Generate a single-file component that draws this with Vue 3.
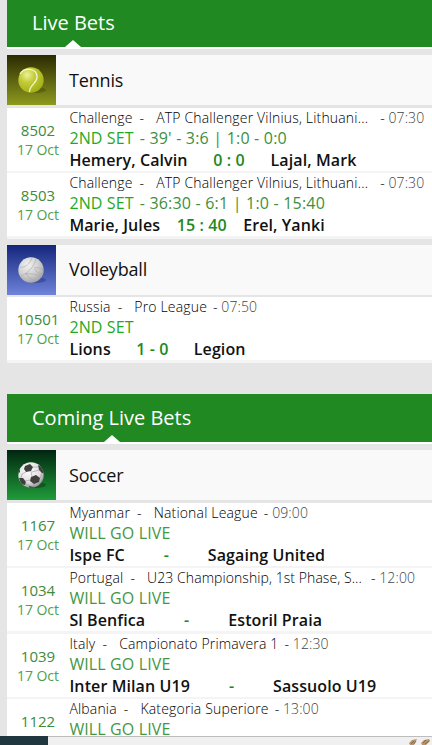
<template>
<div class="page">
    <div class="block" v-for="block in blocks" :key="block.title">
        <div class="block-title" :class="block.size">
            <span>{{ block.title }}</span>
        </div>
        <div class="sport" v-for="sport in block.sports" :key="sport.name">
            <div class="sport-head" :class="sport.icon">
                <div class="sport-icon">
                    <svg v-if="sport.icon === 'tennis'" width="32" height="30" viewBox="0 0 32 30">
                        <defs>
                            <radialGradient id="tg" cx="35%" cy="30%" r="75%">
                                <stop offset="0" stop-color="#eef29a" />
                                <stop offset=".4" stop-color="#c3cb38" />
                                <stop offset="1" stop-color="#a3ae14" />
                            </radialGradient>
                        </defs>
                        <ellipse cx="20" cy="25" rx="10" ry="3" fill="#3c4208" opacity=".4" />
                        <circle cx="15" cy="15" r="12.7" fill="url(#tg)" />
                        <path d="M4 9C8 2 20 3 21 11C22 18 13 20 13.5 27" fill="none" stroke="#f3f5d4" stroke-width="1.3" />
                    </svg>
                    <svg v-else-if="sport.icon === 'volley'" width="32" height="30" viewBox="0 0 32 30">
                        <defs>
                            <radialGradient id="vg" cx="38%" cy="30%" r="75%">
                                <stop offset="0" stop-color="#f2f2f2" />
                                <stop offset=".55" stop-color="#d0d0d0" />
                                <stop offset="1" stop-color="#a2a2a6" />
                            </radialGradient>
                        </defs>
                        <ellipse cx="20" cy="25" rx="10" ry="3" fill="#26347c" opacity=".45" />
                        <circle cx="15" cy="15" r="12.7" fill="url(#vg)" />
                        <g fill="none" stroke="#a8a8a8" stroke-width=".6">
                            <path d="M4 12C9 13 14 9 16 3M5 21C12 18 18 12 20 4M9 19C16 18 23 20 26 22M10 18C12 22 16 25 20 26M18 13C22 12 25 13 27 15M19 14C20 17 23 19 27 19" />
                        </g>
                    </svg>
                    <svg v-else width="32" height="30" viewBox="0 0 32 30">
                        <defs>
                            <radialGradient id="sg" cx="40%" cy="32%" r="72%">
                                <stop offset="0" stop-color="#ffffff" />
                                <stop offset=".65" stop-color="#dedede" />
                                <stop offset="1" stop-color="#909090" />
                            </radialGradient>
                            <clipPath id="sc"><circle cx="15" cy="15" r="12.7" /></clipPath>
                        </defs>
                        <ellipse cx="20" cy="25" rx="10" ry="3" fill="#082e12" opacity=".45" />
                        <circle cx="15" cy="15" r="12.7" fill="url(#sg)" />
                        <g clip-path="url(#sc)">
                            <path d="M9 6L14 4L17 7L15 11L10 12L8 9ZM22 5L26 7L29 13L26 13L23 10ZM15 17L20 15L24 18L23 22L18 24L14 21ZM3 18L7 18L10 22L9 25L5 24ZM2 10L4 9L4 12L2 14ZM13 26L18 27L18 29L13 29Z" fill="#404040" />
                            <path d="M17 7L22 7M15 11L16 17M10 12L6 14L5 18M9 21L14 20M24 18L26 13M23 22L26 24M10 24L14 26M18 24L18 27M16 12L23 10" fill="none" stroke="#999" stroke-width=".6" />
                        </g>
                    </svg>
                </div>
                <p>{{ sport.name }}</p>
            </div>
            <div class="match" v-for="m in sport.matches" :key="m.id">
                <div class="match-id">
                    <p class="num">{{ m.id }}</p>
                    <p v-if="m.date" class="date">{{ m.date }}</p>
                </div>
                <div class="match-info">
                    <div class="league">
                        <span>{{ m.country }}</span>
                        <span class="dash">-</span>
                        <span class="league-name" :class="m.fit">{{ m.league }}</span>
                        <span class="time"><i>-</i> {{ m.time }}</span>
                    </div>
                    <div class="status">
                        <span :class="{ bright: sport.live }">{{ m.status }}</span>
                        <span v-if="m.detail" class="detail">{{ m.detail }}</span>
                    </div>
                    <div v-if="m.home" class="teams">
                        <span>{{ m.home }}</span>
                        <span class="score">{{ m.score }}</span>
                        <span>{{ m.away }}</span>
                    </div>
                </div>
            </div>
        </div>
    </div>
    <div class="bottom-bar">
        <div class="bottom-tab"></div>
        <svg class="wings" width="24" height="6" viewBox="0 0 24 6">
            <path d="M1 4L4 1L9 0L6 6L2 6ZM13 4L16 1L21 0L22 2L18 6L14 6Z" fill="#b8956c" />
            <path d="M3 5L6 2M6 5L8 2M15 4L18 1M17 5L21 2" stroke="#7d5c3a" stroke-width=".8" />
        </svg>
    </div>
</div>
</template>
<script setup>
import { reactive } from 'vue';

const blocks = reactive([
    {
        title : 'Live Bets',
        size : 'first',
        sports : [
            {
                name : 'Tennis', icon : 'tennis', live : true,
                matches : [
                    { id : '8502', date : '17 Oct', country : 'Challenge', league : 'ATP Challenger Vilnius, Lithuani...', fit : 'cut', time : '07:30', status : '2ND SET', detail : "- 39' - 3:6 | 1:0 - 0:0", home : 'Hemery, Calvin', score : '0 : 0', away : 'Lajal, Mark' },
                    { id : '8503', date : '17 Oct', country : 'Challenge', league : 'ATP Challenger Vilnius, Lithuani...', fit : 'cut', time : '07:30', status : '2ND SET', detail : '- 36:30 - 6:1 | 1:0 - 15:40', home : 'Marie, Jules', score : '15 : 40', away : 'Erel, Yanki' },
                ],
            },
            {
                name : 'Volleyball', icon : 'volley', live : true,
                matches : [
                    { id : '10501', date : '17 Oct', country : 'Russia', league : 'Pro League', time : '07:50', status : '2ND SET', home : 'Lions', score : '1 - 0', away : 'Legion' },
                ],
            },
        ],
    },
    {
        title : 'Coming Live Bets',
        size : 'second',
        sports : [
            {
                name : 'Soccer', icon : 'soccer', live : false,
                matches : [
                    { id : '1167', date : '17 Oct', country : 'Myanmar', league : 'National League', time : '09:00', status : 'WILL GO LIVE', home : 'Ispe FC', score : '-', away : 'Sagaing United' },
                    { id : '1034', date : '17 Oct', country : 'Portugal', league : 'U23 Championship, 1st Phase, S...', fit : 'tight', time : '12:00', status : 'WILL GO LIVE', home : 'Sl Benfica', score : '-', away : 'Estoril Praia' },
                    { id : '1039', date : '17 Oct', country : 'Italy', league : 'Campionato Primavera 1', time : '12:30', status : 'WILL GO LIVE', home : 'Inter Milan U19', score : '-', away : 'Sassuolo U19' },
                    { id : '1122', country : 'Albania', league : 'Kategoria Superiore', time : '13:00', status : 'WILL GO LIVE' },
                ],
            },
        ],
    },
]);
</script>
<style>
    body {
        margin: 0;
        background-color: #e5e5e5;
    }
</style>
<style scoped>
    .page {
        position: relative;
        height: 745px;
        overflow: hidden;
        box-sizing: border-box;
        padding-left: 7px;
        background-color: #e5e5e5;
        font-family: "Open Sans", sans-serif;
        color: #111;
    }
    p {
        margin: 0;
    }
    .block + .block {
        margin-top: 31px;
    }
    .block-title {
        height: 47px;
        padding-left: 25px;
        border-bottom: 2px solid #fff;
        background-color: #218921;
        color: #fff;
        font-size: 20px;
        line-height: 46px;
        margin-bottom: 6px;
    }
    .block-title.second {
        height: 48px;
        line-height: 48px;
    }
    .block-title span {
        position: relative;
        display: inline-block;
        height: 100%;
    }
    .block-title span::after {
        content: '';
        position: absolute;
        left: 50%;
        bottom: 0;
        margin-left: -8px;
        border-left: 8px solid transparent;
        border-right: 8px solid transparent;
        border-bottom: 7px solid #fff;
    }
    .sport + .sport {
        margin-top: 6px;
    }
    .sport-head {
        display: flex;
        height: 50px;
        margin-bottom: 3px;
        background-color: #f9f9f9;
    }
    .sport-head.volley {
        margin-bottom: 2px;
    }
    .sport-head p {
        padding-left: 13px;
        font-size: 18px;
        line-height: 50px;
        letter-spacing: -.18px;
    }
    .sport-head.volley p {
        line-height: 49px;
    }
    .sport-icon {
        width: 49px;
        display: flex;
        align-items: center;
        justify-content: center;
    }
    .tennis .sport-icon {
        background: linear-gradient(#2a2a02, #8e9a1e);
    }
    .volley .sport-icon {
        background: linear-gradient(#14267c, #6f83da);
    }
    .soccer .sport-icon {
        background: linear-gradient(#022610, #1f9c3a);
    }
    .match {
        display: flex;
        height: 63px;
        border-bottom: 2px solid #f4f4f4;
        background-color: #fff;
        white-space: nowrap;
    }
    .match:last-child {
        border-bottom-width: 3px;
    }
    .soccer ~ .match:nth-child(3) {
        border-bottom-width: 3px;
    }
    .match-id {
        width: 62px;
        color: #3d8b3d;
        text-align: center;
    }
    .match-id .num {
        padding-top: 12px;
        font-size: 15px;
        line-height: 20px;
    }
    .match-id .date {
        padding-top: 1px;
        font-size: 14px;
        line-height: 18px;
        letter-spacing: -.05px;
        color: #4f9f4f;
    }
    .match-info {
        padding-left: .4px;
    }
    .league {
        display: flex;
        height: 20px;
        font-size: 14px;
        line-height: 20px;
        font-weight: 300;
        letter-spacing: .17px;
        color: #000;
    }
    .dash {
        margin: 0 12px 0 7px;
    }
    .league-name.cut {
        margin-right: 6px;
    }
    .league-name.tight {
        margin-right: 3px;
        letter-spacing: .07px;
    }
    .time {
        margin-left: 6px;
        color: #444;
        letter-spacing: .1px;
    }
    .time i {
        font-style: normal;
        color: #000;
    }
    .status {
        height: 20px;
        font-size: 16px;
        line-height: 21px;
        letter-spacing: .12px;
        color: #439743;
    }
    .status .bright {
        color: #1faa1f;
    }
    .status .detail {
        margin-left: 6px;
        letter-spacing: .2px;
        color: #3d8f3d;
    }
    .teams {
        display: flex;
        height: 23px;
        font-size: 16px;
        line-height: 24px;
        font-weight: 600;
        letter-spacing: .1px;
    }
    .score {
        width: 83px;
        color: #218921;
        text-align: center;
    }
    .bottom-bar {
        position: absolute;
        left: 0;
        right: 0;
        bottom: 0;
        display: flex;
        justify-content: space-between;
        height: 9px;
        background-color: #f0f0f0;
    }
    .bottom-bar::after {
        content: '';
        position: absolute;
        left: 48px;
        right: 0;
        top: 0;
        height: 1px;
        background-color: #bdbdbd;
    }
    .bottom-tab {
        width: 48px;
        background-color: #20373f;
    }
    .wings {
        margin-top: 3px;
    }
</style>
